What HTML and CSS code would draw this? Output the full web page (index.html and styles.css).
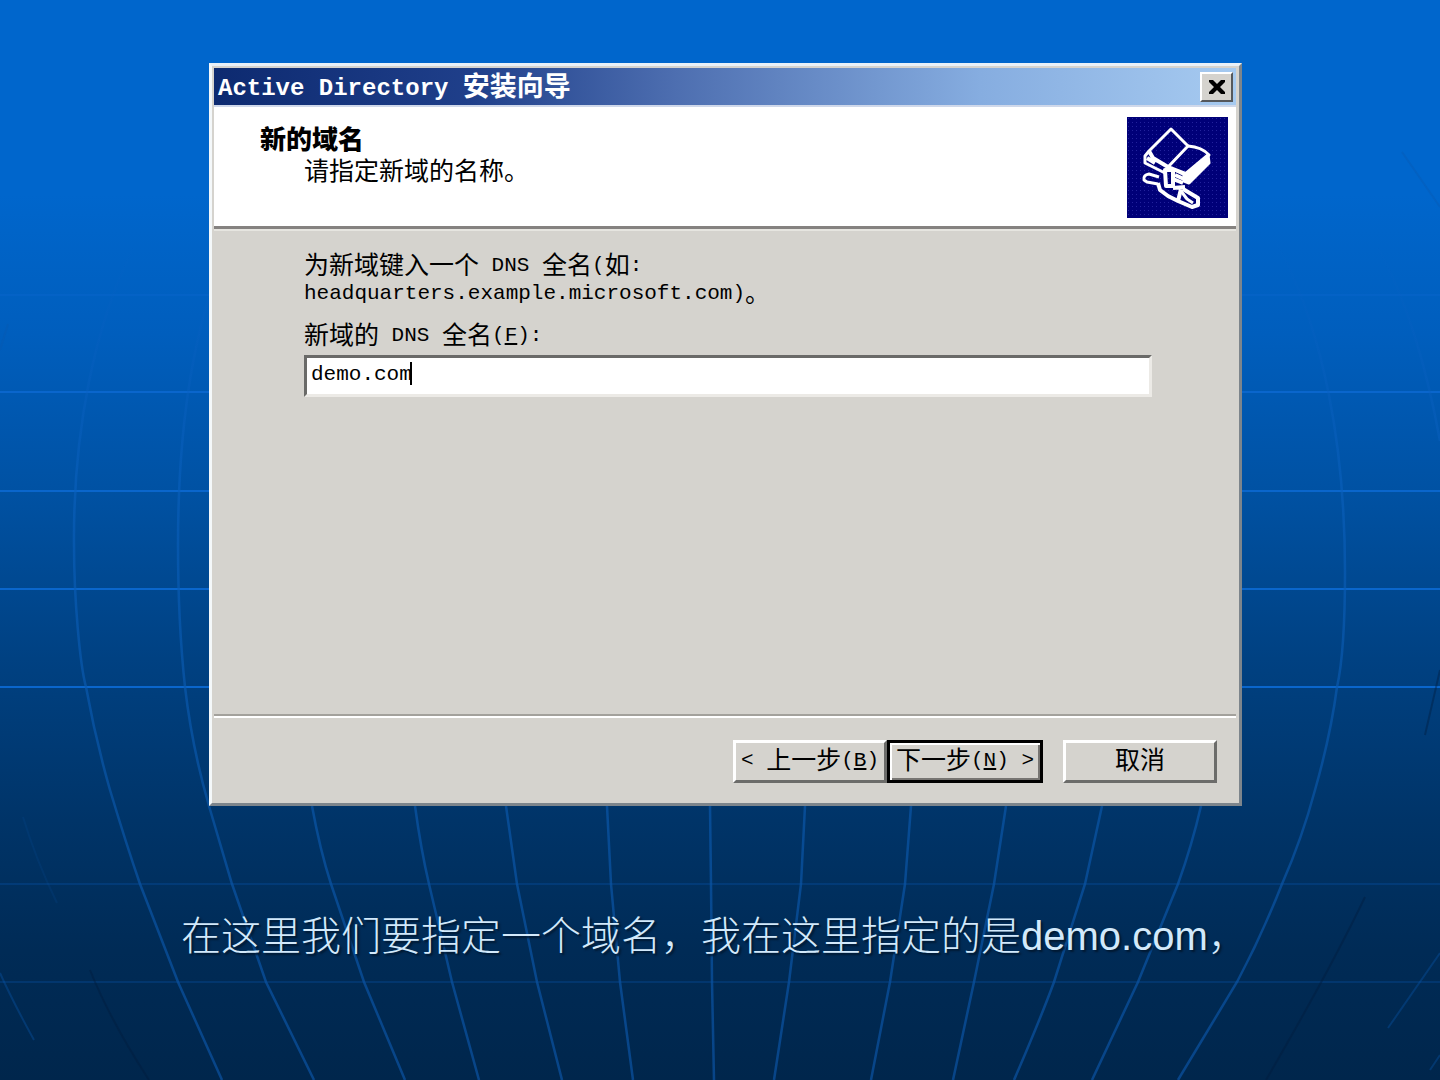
FILE: index.html
```html
<!DOCTYPE html>
<html lang="zh-CN">
<head>
<meta charset="utf-8">
<title>Active Directory 安装向导</title>
<link rel="stylesheet" href="styles.css">
</head>
<body>
<svg class="backdrop" viewBox="0 0 1440 1080" preserveAspectRatio="none" aria-hidden="true">
  <defs>
    <linearGradient id="fade" gradientUnits="userSpaceOnUse" x1="0" y1="230" x2="0" y2="1080">
      <stop offset="0" stop-color="#0a5fc4" stop-opacity="0"/>
      <stop offset="0.3" stop-color="#0a60bd" stop-opacity="0.6"/>
      <stop offset="0.65" stop-color="#0a56a8" stop-opacity="0.7"/>
      <stop offset="1" stop-color="#0a4f9c" stop-opacity="0.75"/>
    </linearGradient>
  </defs>
  <g fill="none" stroke="#0a66cc" stroke-width="2">
    <path d="M0 295H1440" opacity="0.4"/>
    <path d="M0 392H1440M0 491H1440M0 589H1440M0 687H1440"/>
    <path d="M0 884H1440M0 982H1440" opacity="0.22"/>
  </g>
  <g fill="none" stroke="url(#fade)" stroke-width="2.5">
    <path d="M133 248C95 325 73 430 74 545C74 600 80 665 86 687C92 720 100 755 110 790C122 830 130 855 140 884L178 982L222 1080"/>
    <path d="M222 260C190 340 178 440 178 545C178 600 181 650 185 687C190 730 200 775 209 806L232 884L266 982L314 1080"/>
    <path d="M312 806Q320 850 331 884L364 982L405 1080"/>
    <path d="M415 806Q421 850 429 884L452 982L479 1080"/>
    <path d="M506 806L517 884L537 982L562 1080"/>
    <path d="M607 806L611 884L620 982L633 1080"/>
    <path d="M710 806L711 884L712 982L714 1080"/>
    <path d="M805 806L801 884L789 982L774 1080"/>
    <path d="M911 806L905 884L890 982L871 1080"/>
    <path d="M1006 806L994 884L974 982L953 1080"/>
    <path d="M1102 806L1085 884L1054 982Q1040 1020 1014 1080"/>
    <path d="M1201 806Q1192 845 1178 884L1138 982L1092 1080"/>
    <path d="M1275 240C1325 330 1345 450 1345 572C1345 620 1342 665 1337 687C1332 725 1325 755 1315 790C1307 820 1297 850 1282 884Q1262 935 1237 982L1178 1080"/>
    <path d="M1378 248Q1418 320 1440 441"/>
  </g>
  <g fill="none" stroke="#0a5ab0" stroke-width="2" opacity="0.35">
    <path d="M1402 152L1440 207M1440 953L1388 1028M1440 1055L1430 1070M0 973Q12 1000 34 1040M8 324L0 350"/>
    <path d="M23 817Q36 860 57 903" opacity="0.4"/>
  </g>
  <g fill="none" stroke="#001c3c" stroke-width="2" opacity="0.4">
    <path d="M90 970Q110 1020 149 1080M1365 897Q1330 970 1266 1080M1440 670L1425 735"/>
  </g>
</svg>
<main class="slide">
  <section class="window" aria-label="Active Directory 安装向导">
    <header class="titlebar">
      <h1 class="title"><span class="title-latin">Active Directory </span>安装向导</h1>
      <button class="close" type="button" aria-label="关闭">
        <svg viewBox="0 0 18 16" width="18" height="16"><path d="M1 1H5L9 5L13 1H17V3L12 8L17 13V15H13L9 11L5 15H1V13L6 8L1 3Z"/></svg>
      </button>
    </header>
    <div class="banner">
      <div>
        <h2 class="heading">新的域名</h2>
        <p class="subheading">请指定新域的名称。</p>
      </div>
      <svg class="emblem" viewBox="0 0 101 101" aria-hidden="true">
        <defs>
          <pattern id="dots" width="4" height="4" patternUnits="userSpaceOnUse"><rect x="1" y="1" width="1" height="1" fill="#22229c"/></pattern>
        </defs>
        <rect width="101" height="101" fill="#000078"/>
        <rect width="101" height="101" fill="url(#dots)"/>
        <g fill="none" stroke="#fff" stroke-width="3" stroke-linejoin="round">
          <path d="M41 50L61 29L44 12L22 34L18 39V46L38 56"/>
          <path d="M61 29Q75 30 82 38L58 58L41 50"/>
          <path d="M81 38L82 46L62 66L57 64V58Z" fill="#fff"/>
          <path d="M22 34L26 41L41 50L59 57M20 41L28 46M48 58L57 62" stroke-width="4"/>
          <path d="M32 60L22 57Q16 58 17 63L20 65L31 67"/>
          <path d="M38 53H46V69H39ZM46 62L56 66M31 66L33 73L41 79L51 84L54 72M46 71L58 70M56 72L71 81V88L65 90L51 84" stroke-width="4"/>
          <path d="M54 74L60 82L66 86"/>
        </g>
      </svg>
    </div>
    <form class="body">
      <p class="hint">为新域键入一个<span class="latin"> DNS </span>全名<span class="latin">(</span>如<span class="latin">:</span><br><span class="latin">headquarters.example.microsoft.com)</span>。</p>
      <label class="label" for="dns">新域的<span class="latin"> DNS </span>全名<span class="latin">(<u>F</u>):</span></label>
      <div class="field">
        <input class="input" id="dns" type="text" value="demo.com">
        <span class="caret"></span>
      </div>
    </form>
    <footer class="actions">
      <button class="button" type="button"><span class="latin">&lt; </span>上一步<span class="latin">(<u>B</u>)</span></button>
      <button class="button button-default" type="button">下一步<span class="latin">(<u>N</u>) &gt;</span></button>
      <button class="button button-cancel" type="button">取消</button>
    </footer>
  </section>
  <p class="caption">在这里我们要指定一个域名，我在这里指定的是<span class="caption-latin">demo.com</span>，</p>
</main>
</body>
</html>
```
FILE: styles.css
```css
* { box-sizing: border-box; }

body {
  margin: 0;
  min-height: 100vh;
  position: relative;
  background: linear-gradient(#0066cc 0%, #0066cc 18%, #005ebd 31%, #0050a0 47%, #004182 61%, #003468 76%, #002b56 88%, #00264c 100%);
  font-family: "Noto Sans CJK SC", sans-serif;
  color: #000;
}

h1, h2, p { margin: 0; }

.backdrop {
  position: absolute;
  inset: 0;
  width: 100%;
  height: 100%;
}

.slide {
  position: relative;
  padding: 63px 198px 0 209px;
}

.window {
  background: #d5d3ce;
  border: 3px solid;
  border-color: #e8f0f8 #7d858c #7d858c #f4f8fa;
  padding: 2px 3px 0 2px;
}

.titlebar {
  display: flex;
  align-items: center;
  justify-content: space-between;
  height: 37px;
  padding: 0 3px 0 4px;
  background: linear-gradient(90deg, #0d2a70, #1f3f8a 25%, #4d6eb0 45%, #86ade0 75%, #a6caf0);
}

.title {
  padding-bottom: 4px;
  font-size: 27px;
  line-height: 32px;
  font-weight: 700;
  color: #fff;
}

.title-latin {
  font-family: "Liberation Mono", monospace;
  font-size: 24px;
  line-height: 0;
  vertical-align: 1px;
  white-space: pre;
}

.close {
  display: flex;
  align-items: center;
  justify-content: center;
  width: 33px;
  height: 30px;
  padding: 0;
  background: #d5d3ce;
  border: 2px solid;
  border-color: #fff #55585c #55585c #fff;
}

.banner {
  display: flex;
  justify-content: space-between;
  height: 124px;
  padding: 10px 8px 0 46px;
  background: #fff;
  border-top: 2px solid #cfd8ea;
  border-bottom: 3px solid #858280;
}

.heading {
  margin-top: 6px;
  font-size: 26px;
  line-height: 30px;
  font-weight: 900;
}

.subheading {
  padding-left: 44px;
  font-size: 25px;
  line-height: 32px;
}

.emblem {
  width: 101px;
  height: 101px;
}

.latin {
  font-family: "Liberation Mono", monospace;
  font-size: 21px;
  line-height: 0;
  vertical-align: 3px;
  white-space: pre;
}

.body {
  min-height: 485px;
  padding: 18px 84px 0 90px;
  border-top: 2px solid #e6e5e0;
}

.hint, .label {
  display: block;
  font-size: 25px;
  line-height: 28px;
}

.label { margin-top: 14px; }

.field {
  position: relative;
  margin-top: 8px;
}

.input {
  display: block;
  width: 100%;
  height: 42px;
  padding: 0 4px 4px;
  background: #fff;
  border: 3px solid;
  border-color: #6a6a68 #eceae6 #eceae6 #6a6a68;
  border-radius: 0;
  outline: 0;
  font-family: "Liberation Mono", monospace;
  font-size: 21px;
}

.caret {
  position: absolute;
  left: 106px;
  top: 7px;
  width: 2px;
  height: 23px;
  background: #000;
}

.actions {
  display: flex;
  justify-content: flex-end;
  padding: 24px 19px 20px;
  border-top: 2px solid #a3a19c;
  box-shadow: inset 0 2px #fff;
}

.button {
  width: 154px;
  height: 43px;
  padding: 0 0 8px;
  background: #d5d3ce;
  border: 3px solid;
  border-color: #fff #6c6c6a #6c6c6a #fff;
  font-family: inherit;
  font-size: 25px;
  line-height: 28px;
  color: #000;
  white-space: nowrap;
}

.button-default {
  width: 156px;
  border-color: #000;
  box-shadow: inset 2px 2px #fff, inset -2px -2px #777572;
}

.button-cancel { margin-left: 20px; }

.caption {
  margin: 97px -60px 0 -28px;
  font-size: 40px;
  line-height: 60px;
  font-weight: 300;
  color: #d2e9fb;
  text-shadow: 2px 2px 2px #001830;
}

.caption-latin {
  font-family: "Liberation Sans", sans-serif;
  font-weight: 400;
}
```
